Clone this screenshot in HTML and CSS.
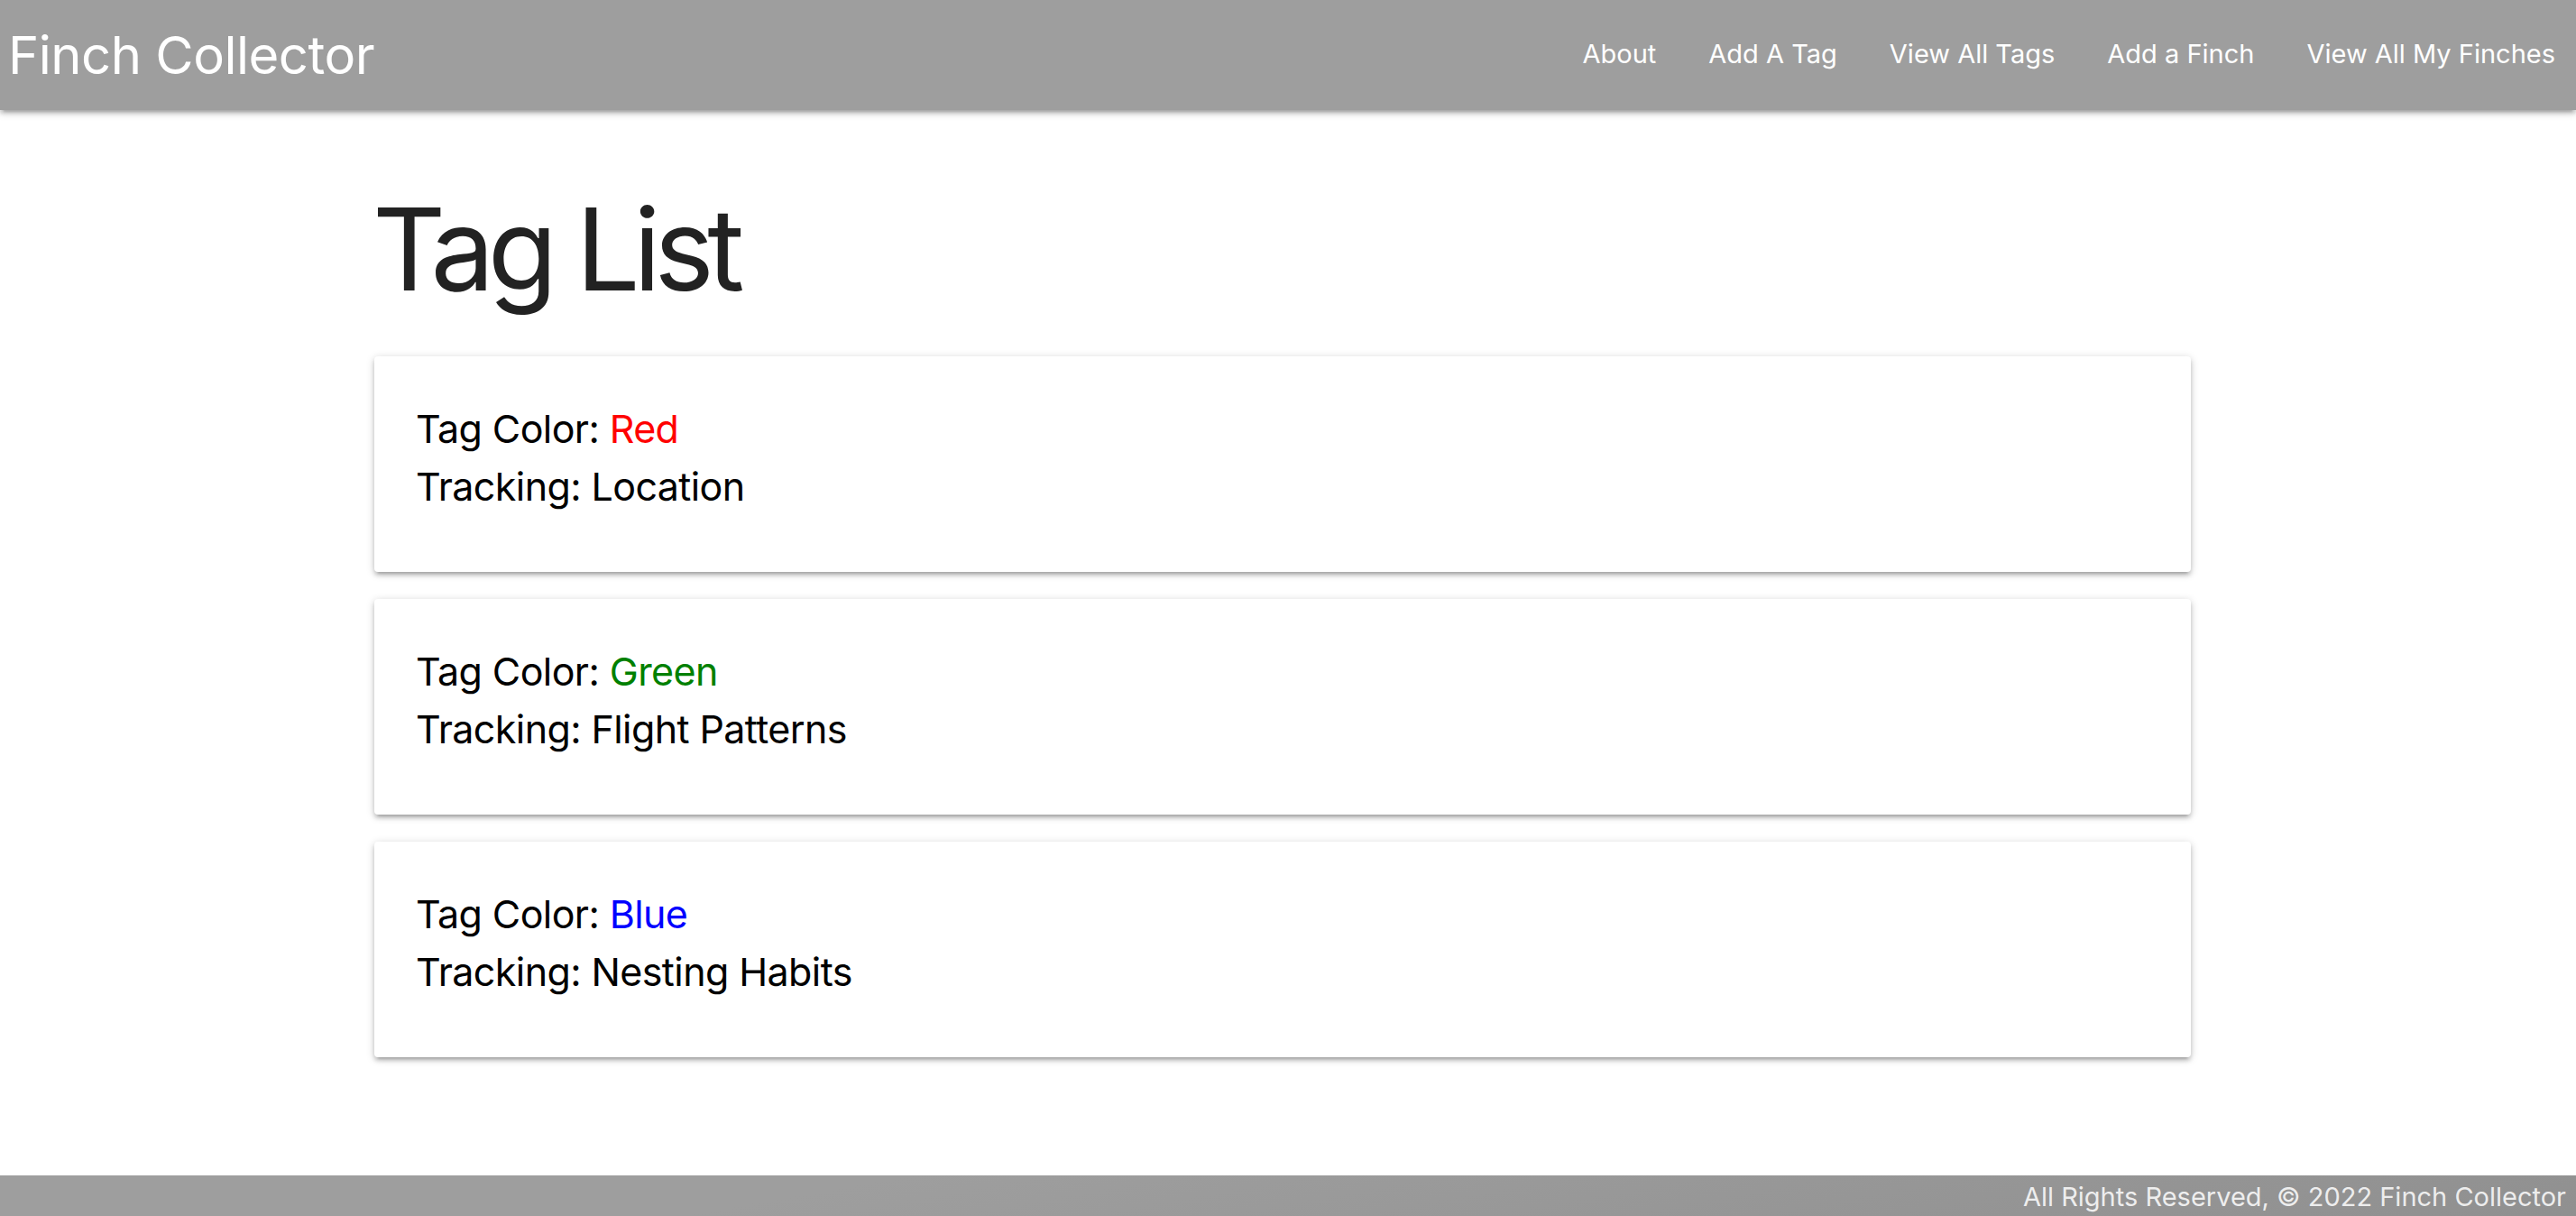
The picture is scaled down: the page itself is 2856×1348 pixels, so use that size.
FILE: index.html
```html
<!DOCTYPE html>
<html lang="en">
<head>
  <meta charset="UTF-8" />
  <meta name="viewport" content="width=device-width, initial-scale=1.0" />
  <title>Finch Collector</title>
  <link rel="stylesheet" href="styles.css">
</head>
<body>
  <header>
    <nav class="navbar">
      <a href="/" class="brand">Finch Collector</a>
      <ul class="nav-links">
        <li><a href="/about">About</a></li>
        <li><a href="/tags/create">Add A Tag</a></li>
        <li><a href="/tags">View All Tags</a></li>
        <li><a href="/finches/create">Add a Finch</a></li>
        <li><a href="/finches">View All My Finches</a></li>
      </ul>
    </nav>
  </header>

  <main class="container">
    <h1>Tag List</h1>

    <div class="card">
      <p>Tag Color: <span class="red">Red</span></p>
      <p>Tracking: Location</p>
    </div>

    <div class="card">
      <p>Tag Color: <span class="green">Green</span></p>
      <p>Tracking: Flight Patterns</p>
    </div>

    <div class="card">
      <p>Tag Color: <span class="blue">Blue</span></p>
      <p>Tracking: Nesting Habits</p>
    </div>
  </main>

  <footer class="page-footer">
    <div class="footer-copyright">All Rights Reserved, &copy; 2022 Finch Collector</div>
  </footer>
</body>
</html>
```

FILE: styles.css
```css
html, body {
  margin: 0;
  padding: 0;
}
body {
  font-family: Inter, "Noto Sans", Roboto, sans-serif;
  color: rgba(0,0,0,0.87);
  background: #fff;
  overflow: hidden;
}
a {
  text-decoration: none;
  color: #fff;
}
.navbar {
  height: 122px;
  background: #9e9e9e;
  display: flex;
  align-items: center;
  justify-content: space-between;
  box-shadow: 0 4px 4px 0 rgba(0,0,0,0.14), 0 6px 2px -4px rgba(0,0,0,0.12), 0 2px 10px 0 rgba(0,0,0,0.2);
  position: relative;
  z-index: 2;
}
.brand {
  font-size: 58px;
  letter-spacing: -0.5px;
  padding-left: 9px;
}
.nav-links {
  list-style: none;
  display: flex;
  margin: 0;
  padding: 0 0 4px 0;
}
.nav-links a {
  display: block;
  padding: 0 29px;
  font-size: 29px;
  letter-spacing: 0;
}
.nav-links li:last-child a {
  padding-right: 23px;
}
.container {
  width: 2014px;
  margin-left: 415px;
  padding-bottom: 101px;
}
h1 {
  font-size: 126px;
  font-weight: 400;
  letter-spacing: -7.5px;
  line-height: 1.1;
  margin: 85px 0 49px -2px;
  color: #222;
}
.card {
  background: #fff;
  border-radius: 4px;
  padding: 48px 46px 63px 46px;
  margin-bottom: 30px;
  box-shadow: 0 4px 4px 0 rgba(0,0,0,0.14), 0 6px 2px -4px rgba(0,0,0,0.12), 0 2px 10px 0 rgba(0,0,0,0.2);
}
.card p {
  margin: 0;
  font-size: 43px;
  line-height: 64px;
  color: #000;
  letter-spacing: -0.6px;
}
.red {
  color: red;
}
.green {
  color: green;
}
.blue {
  color: blue;
}
.page-footer {
  background: linear-gradient(170deg, #9e9e9e 30%, #8e8e8e 100%);
  height: 90px;
}
.footer-copyright {
  text-align: right;
  padding: 0 11px 0 0;
  font-size: 29px;
  line-height: 48px;
  color: rgba(255,255,255,0.85);
}
```
